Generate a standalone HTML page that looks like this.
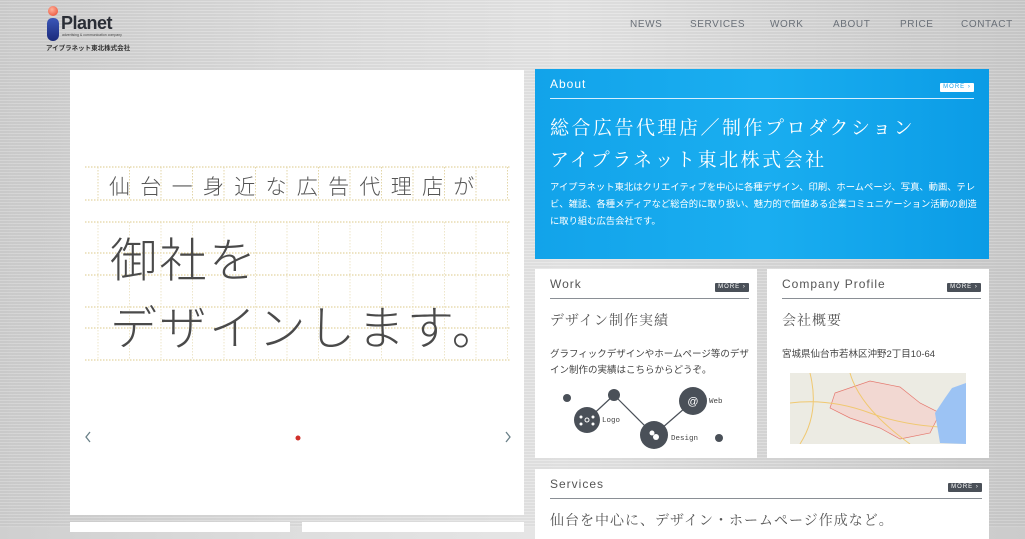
<!DOCTYPE html>
<html><head><meta charset="utf-8"><style>
*{margin:0;padding:0;box-sizing:border-box}
body{width:1025px;height:527px;overflow:hidden;position:relative;font-family:"Liberation Sans","Noto Sans CJK JP",sans-serif;
background:linear-gradient(90deg,#cfcfcf 0%,#dedede 30%,#e6e6e6 55%,#d6d6d6 80%,#cbcbcb 100%);}
body:before{content:"";position:absolute;inset:0;background:repeating-linear-gradient(0deg,rgba(255,255,255,.12) 0 1px,rgba(0,0,0,.03) 1px 3px)}
.abs{position:absolute}
.nav{position:absolute;top:19px;font-size:10px;letter-spacing:.6px;color:#6a7078}
.card{position:absolute;background:#fff}
.hd{position:absolute;left:15px;right:8px;height:22px;border-bottom:1.5px solid #8a8f95;font-size:12px;letter-spacing:1px;color:#555}
.more{position:absolute;right:0;top:6px;width:34px;height:9px;background:#4a5058;color:#fff;font-size:6px;line-height:9px;text-align:center;border-radius:1px}
.m{font-family:"Noto Serif CJK SC","Noto Sans CJK JP",serif;color:#555;letter-spacing:1px;white-space:nowrap}
.j{font-family:"Liberation Sans","Noto Sans CJK JP",sans-serif;font-size:9.5px;line-height:16px;color:#444}
</style></head><body>
<div class="abs" style="left:48px;top:6px;width:10px;height:10px;border-radius:50%;background:radial-gradient(circle at 40% 35%,#ffb19a,#e8432a)"></div>
<div class="abs" style="left:47px;top:18px;width:12px;height:23px;border-radius:6px 6px 7px 7px;background:linear-gradient(#3b56b8,#1b2a7a)"></div>
<div class="abs" style="left:61px;top:13px;font-size:18px;font-weight:bold;color:#2a2e36;letter-spacing:-.5px">Planet</div>
<div class="abs" style="left:62px;top:33px;font-size:3.5px;color:#444">advertising &amp; communication company</div>
<div class="abs" style="left:46px;top:42px;font-size:6.5px;font-weight:bold;color:#333">アイプラネット東北株式会社</div>
<div class="nav" style="left:630px">NEWS</div>
<div class="nav" style="left:690px">SERVICES</div>
<div class="nav" style="left:770px">WORK</div>
<div class="nav" style="left:833px">ABOUT</div>
<div class="nav" style="left:900px">PRICE</div>
<div class="nav" style="left:961px">CONTACT</div>

<div class="card" style="left:70px;top:70px;width:454px;height:445px">
<svg width="454" height="445" style="position:absolute;left:0;top:0">
<g stroke="#dcc98a" stroke-width="1" stroke-dasharray="1.5 1.5" fill="none">
<line x1="15" y1="97" x2="441" y2="97"/><line x1="15" y1="130" x2="441" y2="130"/>
<line x1="15" y1="152" x2="441" y2="152"/><line x1="15" y1="183" x2="441" y2="183"/>
<line x1="15" y1="205" x2="441" y2="205"/><line x1="15" y1="237" x2="441" y2="237"/>
<line x1="15" y1="258" x2="441" y2="258"/><line x1="15" y1="290" x2="441" y2="290"/>
</g>
<g stroke="#e3d6a8" stroke-width="1" stroke-dasharray="1.5 1.5">
<path d="M28 97V130M59.5 97V130M91 97V130M122.5 97V130M154 97V130M185.5 97V130M217 97V130M248.5 97V130M280 97V130M311.5 97V130M343 97V130M374.5 97V130M406 97V130M437.5 97V130"/>
<path d="M28 152V290M59.5 152V290M91 152V290M122.5 152V290M154 152V290M185.5 152V290M217 152V290M248.5 152V290M280 152V290M311.5 152V290M343 152V290M374.5 152V290M406 152V290M437.5 152V290" opacity=".6"/>
</g>
<path d="M20 362l-4 5 4 5M436 362l4 5-4 5" stroke="#6a8088" stroke-width="1.3" fill="none"/>
<circle cx="228" cy="368" r="2.5" fill="#d0302a"/>
</svg>
<div class="abs" style="left:39px;top:101px;font-size:21px;letter-spacing:10.3px;color:#555;font-family:'Noto Sans CJK JP',sans-serif;font-weight:300;white-space:nowrap">仙台一身近な広告代理店が</div>
<div class="abs" style="left:40px;top:153px;font-size:47px;letter-spacing:2.5px;color:#4a4a4a;font-family:'Noto Sans CJK JP',sans-serif;font-weight:300;line-height:68px;white-space:nowrap">御社を<br>デザインします。</div>
</div>
<div class="card" style="left:70px;top:522px;width:220px;height:10px"></div>
<div class="card" style="left:302px;top:522px;width:222px;height:10px"></div>

<div class="card" style="left:535px;top:69px;width:454px;height:190px;background:linear-gradient(90deg,#12a3ea,#1aaef0 50%,#0b9ce6)">
<div class="hd" style="border-color:#d6efff;color:#fff;top:8px;right:15px">About<div class="more" style="background:#fff;color:#1aa0e8">MORE ›</div></div>
<div class="abs m" style="left:15px;top:42px;font-size:19px;color:#fff;line-height:32px;letter-spacing:2.5px">総合広告代理店／制作プロダクション<br>アイプラネット東北株式会社</div>
<div class="abs j" style="left:15px;top:110px;width:430px;color:#fff;font-size:9.3px;line-height:17px">アイプラネット東北はクリエイティブを中心に各種デザイン、印刷、ホームページ、写真、動画、テレビ、雑誌、各種メディアなど総合的に取り扱い、魅力的で価値ある企業コミュニケーション活動の創造に取り組む広告会社です。</div>
</div>

<div class="card" style="left:535px;top:269px;width:222px;height:189px">
<div class="hd" style="top:8px">Work<div class="more">MORE ›</div></div>
<div class="abs m" style="left:15px;top:41px;font-size:14px">デザイン制作実績</div>
<div class="abs j" style="left:15px;top:78px;width:200px">グラフィックデザインやホームページ等のデザイン制作の実績はこちらからどうぞ。</div>
<svg width="222" height="189" style="position:absolute;left:0;top:0">
<g stroke="#4a5058" stroke-width="1.2"><line x1="52" y1="151" x2="79" y2="126"/><line x1="79" y1="126" x2="119" y2="166"/><line x1="119" y1="166" x2="158" y2="132"/></g>
<g fill="#4a5058"><circle cx="32" cy="129" r="4"/><circle cx="79" cy="126" r="6"/><circle cx="52" cy="151" r="13"/><circle cx="119" cy="166" r="14"/><circle cx="158" cy="132" r="14"/><circle cx="184" cy="169" r="4"/></g>
<g fill="#fff"><circle cx="52" cy="151" r="2" fill="none" stroke="#fff"/><circle cx="46" cy="148" r="1.5"/><circle cx="58" cy="148" r="1.5"/><circle cx="46" cy="155" r="1.5"/><circle cx="58" cy="155" r="1.5"/><circle cx="117" cy="164" r="2.5"/><circle cx="121" cy="168" r="3"/></g>
<text x="158" y="136" fill="#fff" font-size="11" text-anchor="middle" font-family="Liberation Sans">@</text>
<g font-family="Liberation Mono" font-size="7.5" fill="#444"><text x="67" y="153">Logo</text><text x="136" y="171">Design</text><text x="174" y="134">Web</text></g>
</svg>
</div>

<div class="card" style="left:767px;top:269px;width:222px;height:189px">
<div class="hd" style="top:8px">Company Profile<div class="more">MORE ›</div></div>
<div class="abs m" style="left:15px;top:41px;font-size:14px">会社概要</div>
<div class="abs j" style="left:15px;top:78px">宮城県仙台市若林区沖野2丁目10-64</div>
<div class="abs" style="left:23px;top:104px;width:176px;height:71px;background:#ecebe3;overflow:hidden">
<svg width="176" height="71"><polygon points="45,20 80,8 110,14 130,30 150,40 140,60 110,66 90,55 60,45 40,35" fill="#f2d8d2" stroke="#e57a70" stroke-width=".7"/>
<path d="M0 30Q40 25 80 40T176 55M20 0Q30 40 10 71M60 0Q70 35 120 71" stroke="#f0c870" fill="none"/>
<path d="M150 70L145 40L155 25L162 15L176 10V71Z" fill="#9cc3f4"/></svg></div>
</div>

<div class="card" style="left:535px;top:469px;width:454px;height:70px">
<div class="hd" style="top:8px;right:7px">Services<div class="more">MORE ›</div></div>
<div class="abs m" style="left:15px;top:41px;font-size:14px">仙台を中心に、デザイン・ホームページ作成など。</div>
</div>
</body></html>
